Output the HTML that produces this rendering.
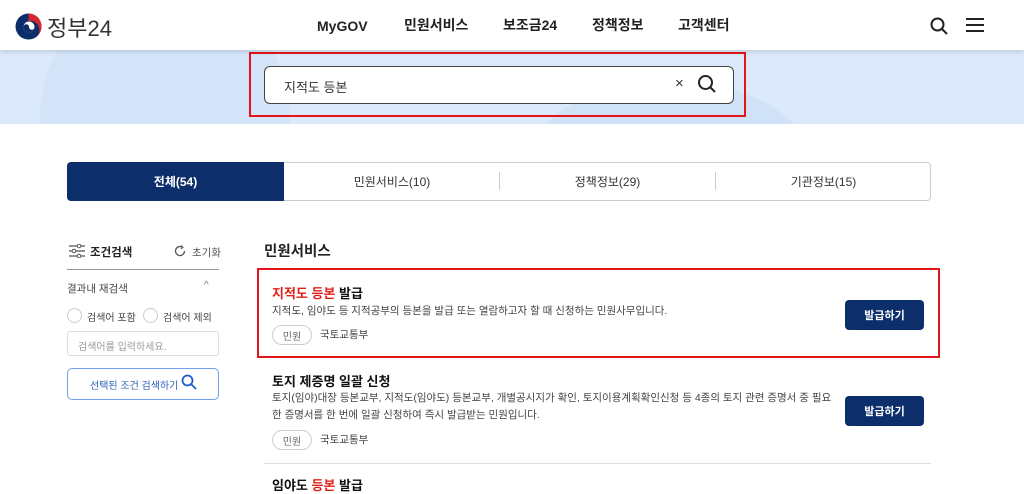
<!DOCTYPE html>
<html><head><meta charset="utf-8"><style>
*{margin:0;padding:0;box-sizing:border-box}
body{width:1024px;height:487px;overflow:hidden;background:#fff;font-family:"Liberation Sans","Noto Sans CJK KR",sans-serif;color:#222;position:relative}
.a{position:absolute}
.hdr{left:0;top:0;width:1024px;height:50px;background:#fff;box-shadow:0 2px 4px rgba(0,0,0,.12);z-index:2}
.nav{top:17px;font-size:14px;font-weight:bold;color:#222;line-height:17px}
.ban{left:0;top:50px;width:1024px;height:74px;background:#dbe9fa;overflow:hidden}
.tab{top:162px;height:39px;font-size:12px;color:#333;display:flex;align-items:center;justify-content:center}
.btn{left:845px;width:79px;height:30px;background:#0c2f6b;color:#fff;font-size:11px;font-weight:bold;border-radius:4px;display:flex;align-items:center;justify-content:center}
.tag{width:40px;height:20px;border:1px solid #ccc;border-radius:10px;font-size:10px;color:#666;display:flex;align-items:center;justify-content:center}
.t{font-size:13px;font-weight:bold;color:#111}
.d{font-size:10.5px;color:#444;line-height:17px}
.r{color:#e0201a}
</style></head><body>
<div class="a hdr">
<svg class="a" style="left:14px;top:12px" width="29" height="29" viewBox="0 0 29 29"><circle cx="14.5" cy="14.5" r="13" fill="#0b2e6b"/><path d="M14.5 1.5 A13 13 0 0 1 27.5 14.5 A13 13 0 0 1 18 27 A9 9 0 0 0 14.5 9 Z" fill="#d8262e"/><circle cx="15" cy="15" r="5.5" fill="#fff"/><path d="M9.5 15 A5.5 5.5 0 0 0 20.5 15 A2.75 2.75 0 0 1 15 15 A2.75 2.75 0 0 0 9.5 15Z" fill="#0b2e6b"/></svg>
<div class="a" style="left:47px;top:11px;font-size:22px;color:#333">정부24</div>
<div class="a nav" style="left:317px;top:18px">MyGOV</div>
<div class="a nav" style="left:404px">민원서비스</div>
<div class="a nav" style="left:503px">보조금24</div>
<div class="a nav" style="left:592px">정책정보</div>
<div class="a nav" style="left:678px">고객센터</div>
<svg class="a" style="left:930px;top:17px" width="18" height="18" viewBox="0 0 18 18"><circle cx="7.5" cy="7.5" r="6" fill="none" stroke="#222" stroke-width="2"/><path d="M12 12l5 5" stroke="#222" stroke-width="2"/></svg>
<svg class="a" style="left:966px;top:17px" width="18" height="16" viewBox="0 0 18 16"><path d="M0 2h18M0 8h18M0 14h18" stroke="#222" stroke-width="2"/></svg>
</div>
<div class="a ban"><div class="a" style="left:40px;top:-60px;width:250px;height:250px;border-radius:50%;background:#d3e4f8"></div><div class="a" style="left:520px;top:30px;width:300px;height:200px;border-radius:50%;background:#d0e2f8"></div></div>
<div class="a" style="left:249px;top:52px;width:497px;height:65px;border:2px solid #e3141a"></div>
<div class="a" style="left:264px;top:66px;width:470px;height:38px;border:1.5px solid #444;border-radius:6px;background:#fff"></div>
<div class="a" style="left:284px;top:77px;font-size:13px;color:#333">지적도 등본</div>
<div class="a" style="left:675px;top:75px;font-size:15px;color:#333">×</div>
<svg class="a" style="left:697px;top:74px" width="20" height="20" viewBox="0 0 20 20"><circle cx="8.5" cy="8.5" r="6.5" fill="none" stroke="#222" stroke-width="2"/><path d="M13 13l5 5" stroke="#222" stroke-width="2"/></svg>

<div class="a" style="left:67px;top:162px;width:864px;height:39px;border:1px solid #ccc;border-radius:4px"></div>
<div class="a tab" style="left:67px;width:217px;background:#0c2f6b;color:#fff;border-radius:4px 0 0 4px;font-weight:bold">전체(54)</div>
<div class="a tab" style="left:284px;width:216px">민원서비스(10)</div>
<div class="a" style="left:499px;top:172px;width:1px;height:18px;background:#ccc"></div>
<div class="a tab" style="left:500px;width:215px">정책정보(29)</div>
<div class="a" style="left:715px;top:172px;width:1px;height:18px;background:#ccc"></div>
<div class="a tab" style="left:716px;width:215px">기관정보(15)</div>

<svg class="a" style="left:69px;top:244px" width="16" height="14" viewBox="0 0 16 14"><path d="M0 2h16M0 7h16M0 12h16" stroke="#555" stroke-width="1.3"/><circle cx="10" cy="2" r="1.8" fill="#fff" stroke="#555"/><circle cx="5" cy="7" r="1.8" fill="#fff" stroke="#555"/><circle cx="10" cy="12" r="1.8" fill="#fff" stroke="#555"/></svg>
<div class="a" style="left:90px;top:244px;font-size:11.5px;font-weight:bold">조건검색</div>
<svg class="a" style="left:174px;top:245px" width="12" height="12" viewBox="0 0 12 12"><path d="M10.5 6A4.5 4.5 0 1 1 8 2" fill="none" stroke="#555" stroke-width="1.3"/><path d="M7 0.5l2 1.8-2 1.5" fill="none" stroke="#555"/></svg>
<div class="a" style="left:192px;top:245px;font-size:10.5px;color:#555">초기화</div>
<div class="a" style="left:67px;top:269px;width:152px;height:1px;background:#999"></div>
<div class="a" style="left:67px;top:281px;font-size:10.5px;color:#444">결과내 재검색</div>
<div class="a" style="left:204px;top:280px;font-size:10px;color:#777">^</div>
<div class="a" style="left:67px;top:308px;width:15px;height:15px;border:1px solid #ccc;border-radius:50%"></div>
<div class="a" style="left:87px;top:309px;font-size:10px;color:#444">검색어 포함</div>
<div class="a" style="left:143px;top:308px;width:15px;height:15px;border:1px solid #ccc;border-radius:50%"></div>
<div class="a" style="left:163px;top:309px;font-size:10px;color:#444">검색어 제외</div>
<div class="a" style="left:67px;top:331px;width:152px;height:25px;border:1px solid #ddd;border-radius:3px;font-size:10px;color:#999;padding:6px 10px">검색어를 입력하세요.</div>
<div class="a" style="left:67px;top:368px;width:152px;height:32px;border:1px solid #6fa0e8;border-radius:5px"></div>
<div class="a" style="left:90px;top:377px;font-size:10px;color:#2b5fb8">선택된 조건 검색하기</div>
<svg class="a" style="left:181px;top:374px" width="16" height="16" viewBox="0 0 16 16"><circle cx="6.5" cy="6.5" r="5" fill="none" stroke="#1e5cc6" stroke-width="1.8"/><path d="M10 10l5 5" stroke="#1e5cc6" stroke-width="1.8"/></svg>

<div class="a" style="left:264px;top:240px;font-size:14.5px;font-weight:bold">민원서비스</div>
<div class="a" style="left:257px;top:268px;width:683px;height:90px;border:2px solid #e3141a"></div>
<div class="a t" style="left:272px;top:283px"><span class="r">지적도 등본</span> 발급</div>
<div class="a d" style="left:272px;top:303px">지적도, 임야도 등 지적공부의 등본을 발급 또는 열람하고자 할 때 신청하는 민원사무입니다.</div>
<div class="a tag" style="left:272px;top:325px">민원</div>
<div class="a" style="left:320px;top:327px;font-size:10.5px;color:#444">국토교통부</div>
<div class="a btn" style="top:300px">발급하기</div>

<div class="a t" style="left:272px;top:371px">토지 제증명 일괄 신청</div>
<div class="a d" style="left:272px;top:390px">토지(임야)대장 등본교부, 지적도(임야도) 등본교부, 개별공시지가 확인, 토지이용계획확인신청 등 4종의 토지 관련 증명서 중 필요<br>한 증명서를 한 번에 일괄 신청하여 즉시 발급받는 민원입니다.</div>
<div class="a tag" style="left:272px;top:430px">민원</div>
<div class="a" style="left:320px;top:432px;font-size:10.5px;color:#444">국토교통부</div>
<div class="a btn" style="top:396px">발급하기</div>
<div class="a" style="left:264px;top:463px;width:667px;height:1px;background:#ddd"></div>
<div class="a t" style="left:272px;top:475px">임야도 <span class="r">등본</span> 발급</div>
</body></html>
